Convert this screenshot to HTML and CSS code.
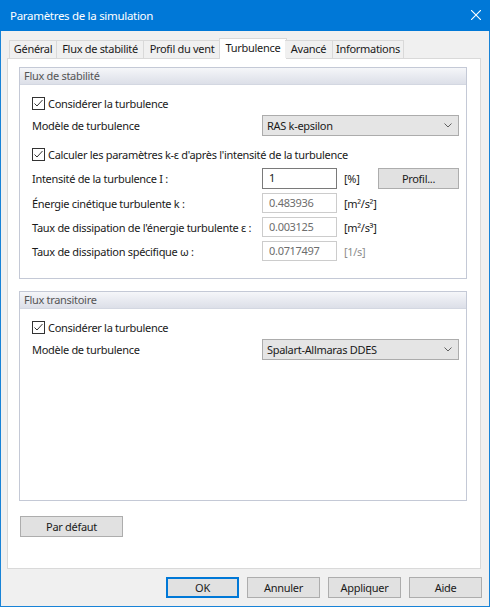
FILE: index.html
```html
<!DOCTYPE html>
<html lang="fr">
<head>
    <meta charset="UTF-8">
    <title>Paramètres de la simulation</title>
    <link rel="stylesheet" href="styles.css">
</head>
<body>
<div class="window">
    <div class="titlebar">
        <span class="title">Paramètres de la simulation</span>
        <svg class="close" width="10" height="10" viewBox="0 0 10 10"><path d="M0 0L10 10M10 0L0 10" stroke="#fff" stroke-width="1.1"/></svg>
    </div>

    <div class="client">
        <div class="tabs">
            <div class="tab t-gen">Général</div>
            <div class="tab t-flux">Flux de stabilité</div>
            <div class="tab t-prof">Profil du vent</div>
            <div class="tab t-turb active">Turbulence</div>
            <div class="tab t-av">Avancé</div>
            <div class="tab t-info">Informations</div>
        </div>

        <div class="panel">
            <div class="group g1">
                <div class="group-head">Flux de stabilité</div>
                <div class="group-body">
                    <label class="row check first">
                        <svg class="box" width="13" height="13" viewBox="0 0 13 13"><rect x=".5" y=".5" width="12" height="12" fill="#fff" stroke="#333"/><path d="M2.5 6.5L5 9L10.5 3" fill="none" stroke="#333" stroke-width="1"/></svg>
                        Considérer la turbulence
                    </label>
                    <div class="row combo-row">
                        <span class="lbl">Modèle de turbulence</span>
                        <div class="combo">RAS k-epsilon
                            <svg class="chev" width="8" height="5" viewBox="0 0 8 5"><path d="M.5 .5L4 4L7.5 .5" fill="none" stroke="#606060"/></svg>
                        </div>
                    </div>
                    <label class="row check calc">
                        <svg class="box" width="13" height="13" viewBox="0 0 13 13"><rect x=".5" y=".5" width="12" height="12" fill="#fff" stroke="#333"/><path d="M2.5 6.5L5 9L10.5 3" fill="none" stroke="#333" stroke-width="1"/></svg>
                        Calculer les paramètres k-ε d'après l'intensité de la turbulence
                    </label>
                    <div class="row field first-field">
                        <span class="lbl">Intensité de la turbulence I :</span>
                        <div class="input">1</div>
                        <span class="unit">[%]</span>
                        <button class="btn profil">Profil...</button>
                    </div>
                    <div class="row field">
                        <span class="lbl">Énergie cinétique turbulente k :</span>
                        <div class="input off">0.483936</div>
                        <span class="unit">[m²/s²]</span>
                    </div>
                    <div class="row field">
                        <span class="lbl">Taux de dissipation de l'énergie turbulente ε :</span>
                        <div class="input off">0.003125</div>
                        <span class="unit">[m²/s³]</span>
                    </div>
                    <div class="row field">
                        <span class="lbl">Taux de dissipation spécifique ω :</span>
                        <div class="input off">0.0717497</div>
                        <span class="unit off">[1/s]</span>
                    </div>
                </div>
            </div>

            <div class="group g2">
                <div class="group-head">Flux transitoire</div>
                <div class="group-body">
                    <label class="row check first">
                        <svg class="box" width="13" height="13" viewBox="0 0 13 13"><rect x=".5" y=".5" width="12" height="12" fill="#fff" stroke="#333"/><path d="M2.5 6.5L5 9L10.5 3" fill="none" stroke="#333" stroke-width="1"/></svg>
                        Considérer la turbulence
                    </label>
                    <div class="row combo-row">
                        <span class="lbl">Modèle de turbulence</span>
                        <div class="combo">Spalart-Allmaras DDES
                            <svg class="chev" width="8" height="5" viewBox="0 0 8 5"><path d="M.5 .5L4 4L7.5 .5" fill="none" stroke="#606060"/></svg>
                        </div>
                    </div>
                </div>
            </div>

            <button class="btn defaut">Par défaut</button>
        </div>

        <div class="footer">
            <button class="btn ok">OK</button>
            <button class="btn">Annuler</button>
            <button class="btn">Appliquer</button>
            <button class="btn">Aide</button>
        </div>
    </div>
</div>
</body>
</html>
```
FILE: styles.css
```css
*{box-sizing:border-box;}
body{margin:0;background:#fff;font-family:"Noto Sans","Segoe UI",sans-serif;font-size:11px;letter-spacing:-.3px;color:#1a1a1a;white-space:nowrap;}
.window{width:490px;height:607px;border:1px solid #1883d7;border-top:0;background:#f0f0f0;display:flex;flex-direction:column;}
.titlebar{height:31px;background:#0078d7;color:#fff;display:flex;align-items:center;padding:0 9px 1px 9px;margin:0 -1px;}
.title{font-size:11.5px;flex:1;padding-left:1px;}

.client{flex:1;padding:7px 8px 0 6px;display:flex;flex-direction:column;}
.tabs{display:flex;align-items:flex-end;height:20px;margin-left:2px;position:relative;z-index:1;}
.tab{height:18px;line-height:16px;border:1px solid #d9d9d9;border-bottom:0;border-left:0;background:#f0f0f0;text-align:center;}
.tab:first-child{border-left:1px solid #d9d9d9;}
.t-gen{width:48px;}
.t-flux{width:87px;}
.t-prof{width:77px;}
.t-turb{width:64px;}
.t-av{width:48px;}
.t-info{width:71px;}
.tab.active{height:21px;line-height:18px;background:#fff;margin:0 -2px -1px -2px;width:68px;border-left:1px solid #d9d9d9;}

.panel{height:511px;background:#fff;border:1px solid #d9d9d9;padding:8px 13px 0 11px;}
.group{border:1px solid #c4c9d6;}
.g1{height:212px;}
.g2{height:210px;margin-top:12px;}
.group-head{height:17px;line-height:15px;padding-left:4px;color:#555;background:linear-gradient(#f5f6f9,#dcdfe8);border-bottom:1px solid #d3d7e1;}
.group-body{padding:0 7px 0 12px;}

.row{display:flex;align-items:center;height:20px;}
.check{cursor:default;}
.check .box{margin-right:3px;flex:none;}
.first{margin-top:8px;}
.combo-row{margin-top:2px;height:21px;}
.calc{margin-top:8px;}
.first-field{margin-top:8px;height:21px;}
.field{margin-top:4px;}
.lbl{width:230px;flex:none;}

.combo{margin-left:auto;width:197px;height:21px;line-height:19px;background:#e5e5e5;border:1px solid #acacac;padding-left:4px;display:flex;align-items:center;}
.chev{margin-left:auto;margin-right:6px;}

.input{width:75px;height:100%;border:1px solid #7a7a7a;background:#fff;padding-left:6px;line-height:18px;}
.input.off{border-color:#cccccc;color:#6d6d6d;}
.unit{margin-left:7px;}
.unit.off{color:#8d8d8d;}

.btn{font-family:inherit;font-size:11px;letter-spacing:inherit;color:#1a1a1a;background:#e1e1e1;border:1px solid #adadad;height:21px;padding:0;cursor:default;}
.profil{margin-left:auto;width:81px;}
.defaut{width:103px;margin:15px 0 0 1px;}
.footer{display:flex;justify-content:flex-end;gap:8px;margin:8px -1px 0 0;}
.footer .btn{width:73px;}
.btn.ok{border:2px solid #0078d7;}
```
